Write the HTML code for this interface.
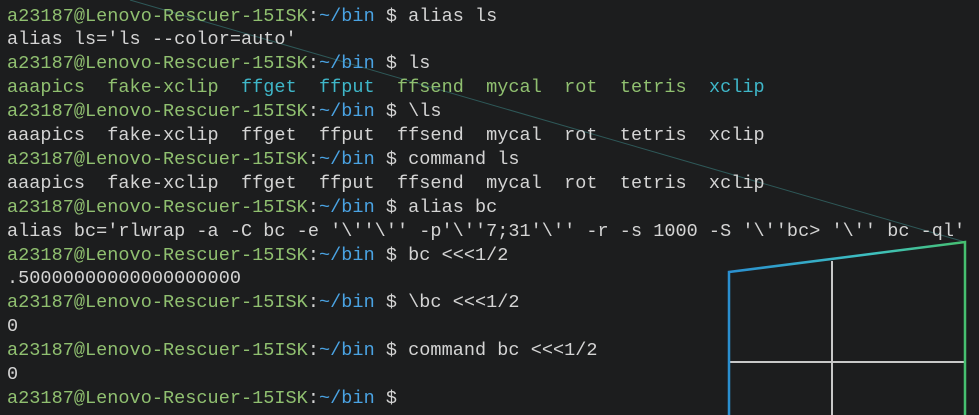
<!DOCTYPE html>
<html><head><meta charset="utf-8"><style>
html,body{margin:0;padding:0;background:#1c1d1e;width:979px;height:415px;overflow:hidden}
pre{position:absolute;left:7px;top:4.5px;margin:0;font-family:"Liberation Mono","DejaVu Sans Mono",monospace;font-size:18.5px;letter-spacing:0.04px;line-height:23.9px;color:#d4d4d4;white-space:pre}
.g{color:#90c070}.b{color:#4aa3e3}.c{color:#3fb7c9}
svg{position:absolute;left:0;top:0}
</style></head><body>
<svg width="979" height="415">
<defs><linearGradient id="lg" x1="0" y1="0" x2="1" y2="0"><stop offset="0" stop-color="#2a8fd0"/><stop offset="0.6" stop-color="#3ec0c0"/><stop offset="1" stop-color="#46c070"/></linearGradient></defs>
<line x1="130" y1="0" x2="965" y2="242" stroke="#3a8080" stroke-width="1" opacity="0.6"/>
<line x1="832" y1="261" x2="832" y2="415" stroke="#c8c8c8" stroke-width="2"/>
<line x1="730" y1="362" x2="964" y2="362" stroke="#c8c8c8" stroke-width="2"/>
<polyline points="729,415 729,272 965,242 965,415" fill="none" stroke="url(#lg)" stroke-width="2.5"/>
</svg>
<pre><span class="g">a23187@Lenovo-Rescuer-15ISK</span>:<span class="b">~/bin</span> $ alias ls
alias ls='ls --color=auto'
<span class="g">a23187@Lenovo-Rescuer-15ISK</span>:<span class="b">~/bin</span> $ ls
<span class="g">aaapics  fake-xclip</span>  <span class="c">ffget  ffput</span>  <span class="g">ffsend  mycal  rot  tetris</span>  <span class="c">xclip</span>
<span class="g">a23187@Lenovo-Rescuer-15ISK</span>:<span class="b">~/bin</span> $ \ls
aaapics  fake-xclip  ffget  ffput  ffsend  mycal  rot  tetris  xclip
<span class="g">a23187@Lenovo-Rescuer-15ISK</span>:<span class="b">~/bin</span> $ command ls
aaapics  fake-xclip  ffget  ffput  ffsend  mycal  rot  tetris  xclip
<span class="g">a23187@Lenovo-Rescuer-15ISK</span>:<span class="b">~/bin</span> $ alias bc
alias bc='rlwrap -a -C bc -e '\''\'' -p'\''7;31'\'' -r -s 1000 -S '\''bc> '\'' bc -ql'
<span class="g">a23187@Lenovo-Rescuer-15ISK</span>:<span class="b">~/bin</span> $ bc &lt;&lt;&lt;1/2
.50000000000000000000
<span class="g">a23187@Lenovo-Rescuer-15ISK</span>:<span class="b">~/bin</span> $ \bc &lt;&lt;&lt;1/2
0
<span class="g">a23187@Lenovo-Rescuer-15ISK</span>:<span class="b">~/bin</span> $ command bc &lt;&lt;&lt;1/2
0
<span class="g">a23187@Lenovo-Rescuer-15ISK</span>:<span class="b">~/bin</span> $ </pre>
</body></html>
